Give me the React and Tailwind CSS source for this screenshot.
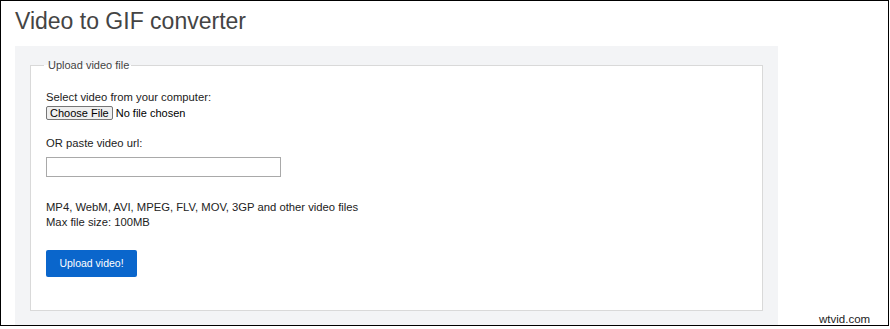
export default function App() {
  return (
    <div className="w-[890px] h-[329px] bg-white" style={{ fontFamily: '"Liberation Sans", Arial, sans-serif' }}>
      <div className="relative w-[889px] h-[326px] border border-black overflow-hidden bg-white">
        <h1 className="ml-[14px] mt-[7px] text-[23px] leading-[26px] text-[#444] font-normal">
          Video to GIF converter
        </h1>
        <div className="ml-[14px] mt-[12px] w-[763px] bg-[#f3f4f6] pt-[13px] px-[15px] pb-[15px]">
          <fieldset className="border border-[#d9d9d9] bg-white px-[13px] pb-[33px]">
            <legend className="pl-[4px] pr-[2px] text-[11px] leading-[13px] text-[#444]">Upload video file</legend>
            <div className="px-[2px] text-[11.25px] text-[#222]">
              <div className="mt-[19px] leading-[13px]">Select video from your computer:</div>
              <div className="mt-[2px] flex items-center h-[14px]">
                <span className="h-[14px] flex items-center border border-[#767676] rounded-[2px] bg-[#efefef] px-[3px] text-[11px] leading-[12px] text-black">
                  Choose File
                </span>
                <span className="ml-[3px] text-[11px] leading-[13px] text-black">No file chosen</span>
              </div>
              <div className="mt-[17px] leading-[13px]">OR paste video url:</div>
              <div className="mt-[7px] w-[235px] h-[20px] border border-[#a9a9a9] bg-white"></div>
              <div className="mt-[23px] leading-[15px]">
                <div>MP4, WebM, AVI, MPEG, FLV, MOV, 3GP and other video files</div>
                <div>Max file size: 100MB</div>
              </div>
              <button className="mt-[20px] w-[91px] h-[27px] rounded-[2px] bg-[#0a66cc] text-white text-[10.5px] flex items-center justify-center">
                Upload video!
              </button>
            </div>
          </fieldset>
        </div>
        <div className="absolute left-[818px] top-[312px] text-[11.5px] leading-[13px] text-[#222]">wtvid.com</div>
      </div>
    </div>
  );
}
